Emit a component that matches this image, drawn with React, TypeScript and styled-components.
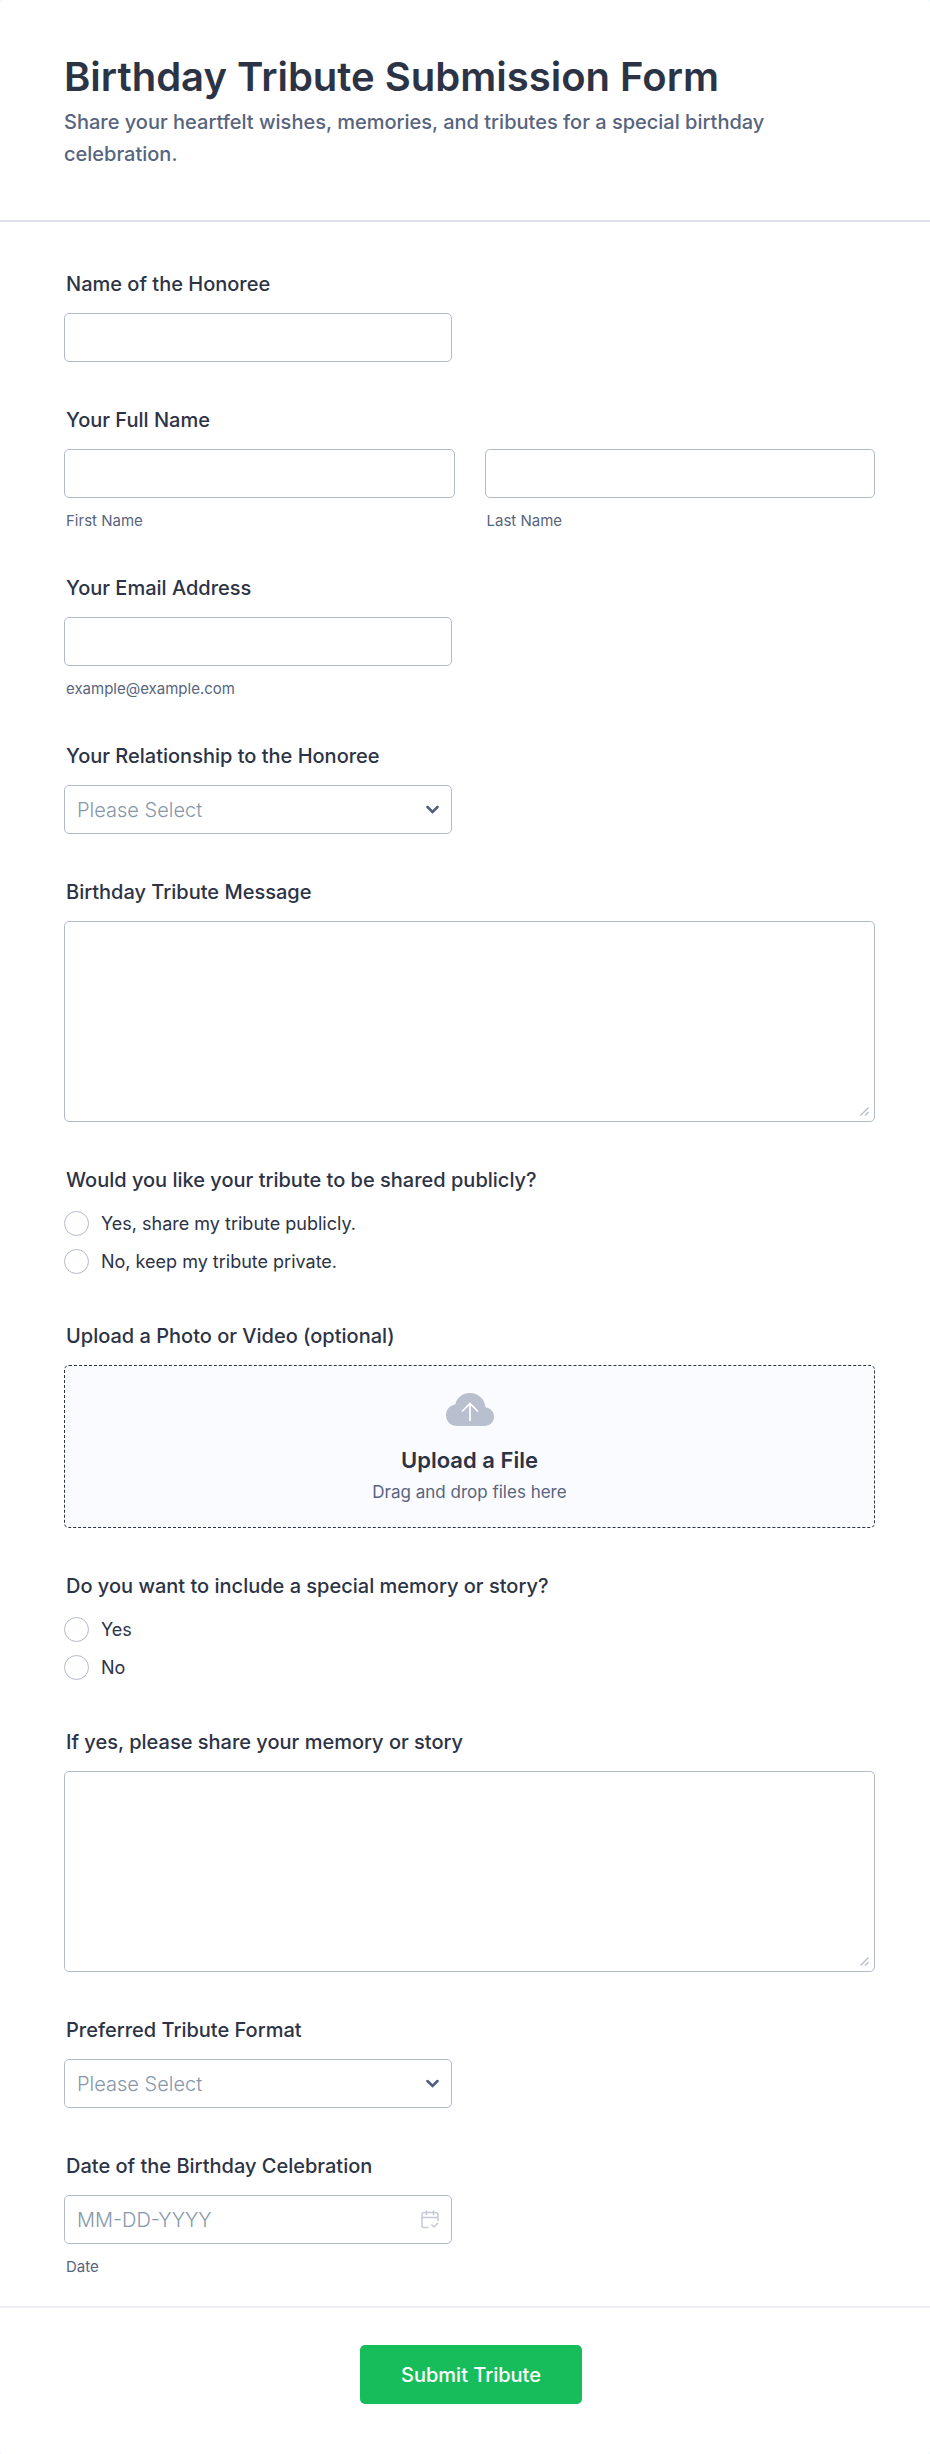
import React, { useId } from 'react';
import styled, { createGlobalStyle } from 'styled-components';

const color = {
  ink: '#2c3345',
  muted: '#57647e',
  border: '#b3bacb',
  cloud: '#b8bfce',
  faint: '#8797aa',
  focus: '#2e69ff',
  green: '#18bd5b',
};

const GlobalStyle = createGlobalStyle`
  *, *::before, *::after { box-sizing: border-box; }
  body {
    margin: 0;
    background: #f0f9fd;
    color: ${color.ink};
    font-family: Inter, "Liberation Sans", sans-serif;
  }
  button, input, select, textarea { font-family: inherit; }
`;

const Form = styled.form`
  width: 100%;
  border-radius: 4px;
  background: #fff;
`;

const Header = styled.header`
  padding: 53px 64px 50px;
  border-bottom: 2px solid #dfe2ea;
`;

const Title = styled.h1`
  margin: 0 0 5px;
  font-size: 40px;
  line-height: 48px;
  font-weight: 600;
`;

const Subtitle = styled.p`
  margin: 0;
  color: ${color.muted};
  font-size: 20px;
  line-height: 32px;
  font-weight: 500;
`;

const Fields = styled.div`
  display: flex;
  flex-direction: column;
  gap: 46px;
  padding: 50px 55px 30px 64px;
`;

const Field = styled.div`
  display: flex;
  flex-direction: column;
`;

const Group = styled.fieldset`
  display: flex;
  flex-direction: column;
  min-width: 0;
  margin: 0;
  padding: 0;
  border: 0;
`;

const Label = styled.label`
  display: block;
  margin-bottom: 17px;
  padding: 0 2px;
  font-size: 20px;
  line-height: 24px;
  font-weight: 500;
`;

const SubLabel = styled.label`
  display: block;
  margin-top: 14px;
  padding: 0 2px;
  color: ${color.muted};
  font-size: 15px;
  line-height: 18px;
`;

const controlStyle = `
  display: block;
  width: 100%;
  border: 1px solid ${color.border};
  border-radius: 5px;
  background: #fff;
  color: ${color.ink};
  font-size: 20px;
  font-weight: 300;
  outline: none;
  &:focus { border-color: ${color.focus}; }
`;

const Input = styled.input`
  ${controlStyle}
  height: 49px;
  padding: 0 12px;
  &::placeholder { color: ${color.faint}; opacity: 1; }
`;

const Select = styled.select`
  ${controlStyle}
  height: 49px;
  padding: 0 40px 0 12px;
  color: ${color.faint};
  appearance: none;
`;

const Textarea = styled.textarea`
  ${controlStyle}
  height: 201px;
  padding: 12px;
  resize: none;
`;

const Control = styled.div<{ $half?: boolean }>`
  position: relative;
  width: 100%;
  max-width: ${(p) => (p.$half ? '388px' : 'none')};
`;

const Adornment = styled.span<{ $corner?: boolean }>`
  position: absolute;
  right: ${(p) => (p.$corner ? '6px' : '13px')};
  top: ${(p) => (p.$corner ? 'auto' : '0')};
  bottom: ${(p) => (p.$corner ? '6px' : '0')};
  display: flex;
  align-items: center;
  pointer-events: none;
`;

const NameRow = styled.div`
  display: grid;
  grid-template-columns: 1fr 1fr;
  gap: 30px;
`;

const Options = styled.div`
  display: flex;
  flex-direction: column;
  gap: 13px;
  padding: 2px 0 4px;
`;

const Option = styled.label`
  display: flex;
  align-items: center;
  gap: 12px;
  font-size: 18px;
  line-height: 25px;
`;

const Radio = styled.input`
  appearance: none;
  width: 25px;
  height: 25px;
  margin: 0;
  border: 1px solid ${color.border};
  border-radius: 50%;
  background: #fff;
  &:checked { border: 7px solid ${color.focus}; }
`;

const DropZone = styled.button`
  display: flex;
  flex-direction: column;
  align-items: center;
  width: 100%;
  height: 163px;
  padding: 27px 12px 0;
  border: 1px dashed ${color.ink};
  border-radius: 5px;
  background: #fafbff;
  color: ${color.ink};
`;

const DropTitle = styled.span`
  margin-top: 18px;
  font-size: 22px;
  line-height: 32px;
  font-weight: 600;
`;

const DropHint = styled.span`
  margin-top: 4px;
  color: ${color.muted};
  font-size: 17px;
  line-height: 24px;
`;

const Footer = styled.footer`
  display: flex;
  justify-content: center;
  padding: 37px 52px 50px 64px;
  border-top: 2px solid #eeeff5;
`;

const Submit = styled.button`
  min-width: 222px;
  height: 59px;
  padding: 0 24px;
  border: 0;
  border-radius: 5px;
  background: ${color.green};
  color: #fff;
  font-size: 20px;
  font-weight: 500;
`;

const Chevron = () => (
  <svg width="13" height="9" viewBox="0 0 13 9" fill="none" aria-hidden="true">
    <path d="M1.5 2l5 5 5-5" stroke="#4f5d7e" strokeWidth="2.5" strokeLinecap="round" />
  </svg>
);

const Grip = () => (
  <svg width="9" height="9" viewBox="0 0 9 9" fill="none" aria-hidden="true">
    <path d="M.5 8.5l8-8M5 8.5l3.5-3.5" stroke={color.border} strokeWidth="1.2" />
  </svg>
);

const Calendar = () => (
  <svg width="18" height="19" viewBox="0 0 18 19" fill="none" stroke="#c5cad6" strokeWidth="1.5" aria-hidden="true">
    <path d="M7.5 17.5H3a2 2 0 0 1-2-2v-11a2 2 0 0 1 2-2h12a2 2 0 0 1 2 2V11M1 7.500h16M5.500.5V5M12.500.5V5M10.500 14.500l2.500 2.500 4.200-4.200" />
  </svg>
);

const Cloud = () => (
  <svg width="48" height="33" viewBox="0 0 48 33" aria-hidden="true">
    <path
      d="M11 33C4.800 33 0 28.400 0 22.300 0 16.500 3.900 12.200 9.300 11.400 10.700 4.600 16.600 0 24 0c8.300 0 15 6.300 15.500 14.300C44.500 15 48 18.900 48 23.700 48 29 43.800 33 38.500 33z"
      fill={color.cloud}
    />
    <path d="M24 28V11M16 18.500l8-8 8 8" fill="none" stroke="#fff" strokeWidth="1.7" />
  </svg>
);

function TextField({ label, hint, type = 'text' }: { label: string; hint?: string; type?: string }) {
  const id = useId();
  return (
    <Field>
      <Label htmlFor={id}>{label}</Label>
      <Control $half>
        <Input id={id} type={type} />
      </Control>
      {hint && <SubLabel htmlFor={id}>{hint}</SubLabel>}
    </Field>
  );
}

function SelectField({ label, options }: { label: string; options: string[] }) {
  const id = useId();
  return (
    <Field>
      <Label htmlFor={id}>{label}</Label>
      <Control $half>
        <Select id={id} defaultValue="">
          <option value="">Please Select</option>
          {options.map((o) => (
            <option key={o}>{o}</option>
          ))}
        </Select>
        <Adornment>
          <Chevron />
        </Adornment>
      </Control>
    </Field>
  );
}

function MessageField({ label }: { label: string }) {
  const id = useId();
  return (
    <Field>
      <Label htmlFor={id}>{label}</Label>
      <Control>
        <Textarea id={id} />
        <Adornment $corner>
          <Grip />
        </Adornment>
      </Control>
    </Field>
  );
}

function RadioField({ label, options }: { label: string; options: string[] }) {
  const name = useId();
  return (
    <Group>
      <Label as="legend">{label}</Label>
      <Options>
        {options.map((o) => (
          <Option key={o}>
            <Radio type="radio" name={name} />
            {o}
          </Option>
        ))}
      </Options>
    </Group>
  );
}

export default function App() {
  return (
    <>
      <GlobalStyle />
      <Form onSubmit={(e) => e.preventDefault()}>
        <Header>
          <Title>Birthday Tribute Submission Form</Title>
          <Subtitle>Share your heartfelt wishes, memories, and tributes for a special birthday celebration.</Subtitle>
        </Header>
        <Fields>
          <TextField label="Name of the Honoree" />
          <Group>
            <Label as="legend">Your Full Name</Label>
            <NameRow>
              <Field>
                <Input id="first" autoComplete="given-name" />
                <SubLabel htmlFor="first">First Name</SubLabel>
              </Field>
              <Field>
                <Input id="last" autoComplete="family-name" />
                <SubLabel htmlFor="last">Last Name</SubLabel>
              </Field>
            </NameRow>
          </Group>
          <TextField label="Your Email Address" hint="example@example.com" type="email" />
          <SelectField label="Your Relationship to the Honoree" options={['Family', 'Friend', 'Colleague']} />
          <MessageField label="Birthday Tribute Message" />
          <RadioField
            label="Would you like your tribute to be shared publicly?"
            options={['Yes, share my tribute publicly.', 'No, keep my tribute private.']}
          />
          <Field>
            <Label htmlFor="upload">Upload a Photo or Video (optional)</Label>
            <DropZone id="upload" type="button">
              <Cloud />
              <DropTitle>Upload a File</DropTitle>
              <DropHint>Drag and drop files here</DropHint>
            </DropZone>
          </Field>
          <RadioField label="Do you want to include a special memory or story?" options={['Yes', 'No']} />
          <MessageField label="If yes, please share your memory or story" />
          <SelectField label="Preferred Tribute Format" options={['Written', 'Photo', 'Video']} />
          <Field>
            <Label htmlFor="date">Date of the Birthday Celebration</Label>
            <Control $half>
              <Input id="date" placeholder="MM-DD-YYYY" />
              <Adornment>
                <Calendar />
              </Adornment>
            </Control>
            <SubLabel htmlFor="date">Date</SubLabel>
          </Field>
        </Fields>
        <Footer>
          <Submit type="submit">Submit Tribute</Submit>
        </Footer>
      </Form>
    </>
  );
}
